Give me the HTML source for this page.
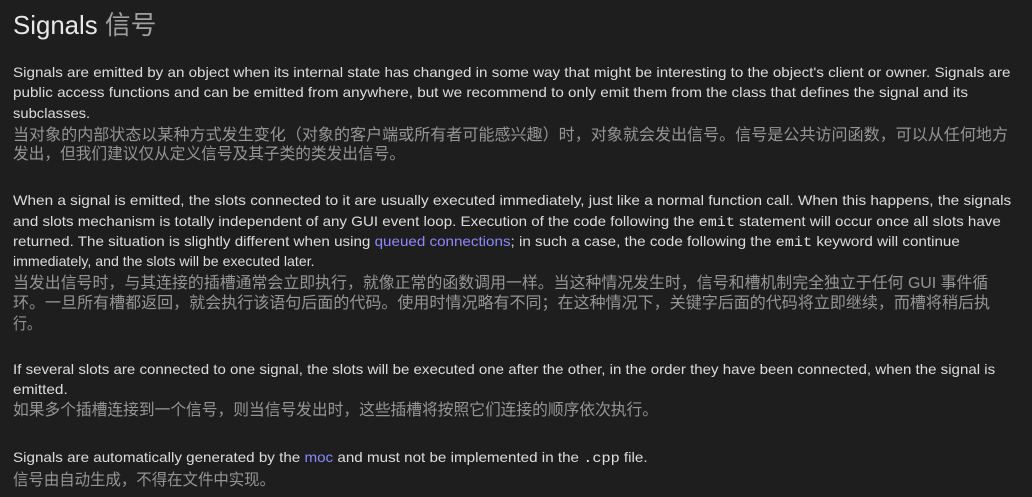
<!DOCTYPE html>
<html><head><meta charset="utf-8"><style>
html,body{margin:0;padding:0;background:#1e1e1e;width:1032px;height:497px;overflow:hidden}
.l{position:absolute;left:13px;white-space:nowrap;line-height:18px;height:18px;transform-origin:0 50%;font-family:"Liberation Sans","Noto Sans CJK SC",sans-serif;font-size:14px;color:#dcdcdc}
.c{color:#959595;font-size:16px}
.t{font-size:26px;line-height:30px;height:30px;color:#e8e8e8}
.t span{color:#a0a0a0}
a{color:#8a8aff;text-decoration:none}
code{font-family:"Liberation Mono",monospace;font-size:14px;color:#e0e0e0}
</style></head><body>
<div class="l t" style="top:10px;--w:144">Signals <span>信号</span></div>

<div class="l" style="top:63px;--w:997">Signals are emitted by an object when its internal state has changed in some way that might be interesting to the object's client or owner. Signals are</div>
<div class="l" style="top:83px;--w:955">public access functions and can be emitted from anywhere, but we recommend to only emit them from the class that defines the signal and its</div>
<div class="l" style="top:104px;--w:77">subclasses.</div>
<div class="l c" style="top:127px;--w:995">当对象的内部状态以某种方式发生变化（对象的客户端或所有者可能感兴趣）时，对象就会发出信号。信号是公共访问函数，可以从任何地方</div>
<div class="l c" style="top:146px;--w:392">发出，但我们建议仅从定义信号及其子类的类发出信号。</div>

<div class="l" style="top:191px;--w:998">When a signal is emitted, the slots connected to it are usually executed immediately, just like a normal function call. When this happens, the signals</div>
<div class="l" style="top:212px;--w:988">and slots mechanism is totally independent of any GUI event loop. Execution of the code following the <code>emit</code> statement will occur once all slots have</div>
<div class="l" style="top:232px;--w:947">returned. The situation is slightly different when using <a>queued connections</a>; in such a case, the code following the <code>emit</code> keyword will continue</div>
<div class="l" style="top:252px;--w:302">immediately, and the slots will be executed later.</div>
<div class="l c" style="top:275px;--w:975">当发出信号时，与其连接的插槽通常会立即执行，就像正常的函数调用一样。当这种情况发生时，信号和槽机制完全独立于任何 GUI 事件循</div>
<div class="l c" style="top:295px;--w:977">环。一旦所有槽都返回，就会执行该语句后面的代码。使用时情况略有不同；在这种情况下，关键字后面的代码将立即继续，而槽将稍后执</div>
<div class="l c" style="top:316px;--w:28">行。</div>

<div class="l" style="top:360px;--w:982">If several slots are connected to one signal, the slots will be executed one after the other, in the order they have been connected, when the signal is</div>
<div class="l" style="top:380px;--w:55">emitted.</div>
<div class="l c" style="top:402px;--w:645">如果多个插槽连接到一个信号，则当信号发出时，这些插槽将按照它们连接的顺序依次执行。</div>

<div class="l" style="top:448px;--w:635">Signals are automatically generated by the <a>moc</a> and must not be implemented in the <code>.cpp</code> file.</div>
<div class="l c" style="top:472px;--w:262">信号由自动生成，不得在文件中实现。</div>
<script>
document.querySelectorAll('.l').forEach(function(e){
var w=parseFloat(getComputedStyle(e).getPropertyValue('--w'));
var r=e.scrollWidth; if(w&&r) e.style.transform='scaleX('+(w/r)+')';
});
</script>
</body></html>
